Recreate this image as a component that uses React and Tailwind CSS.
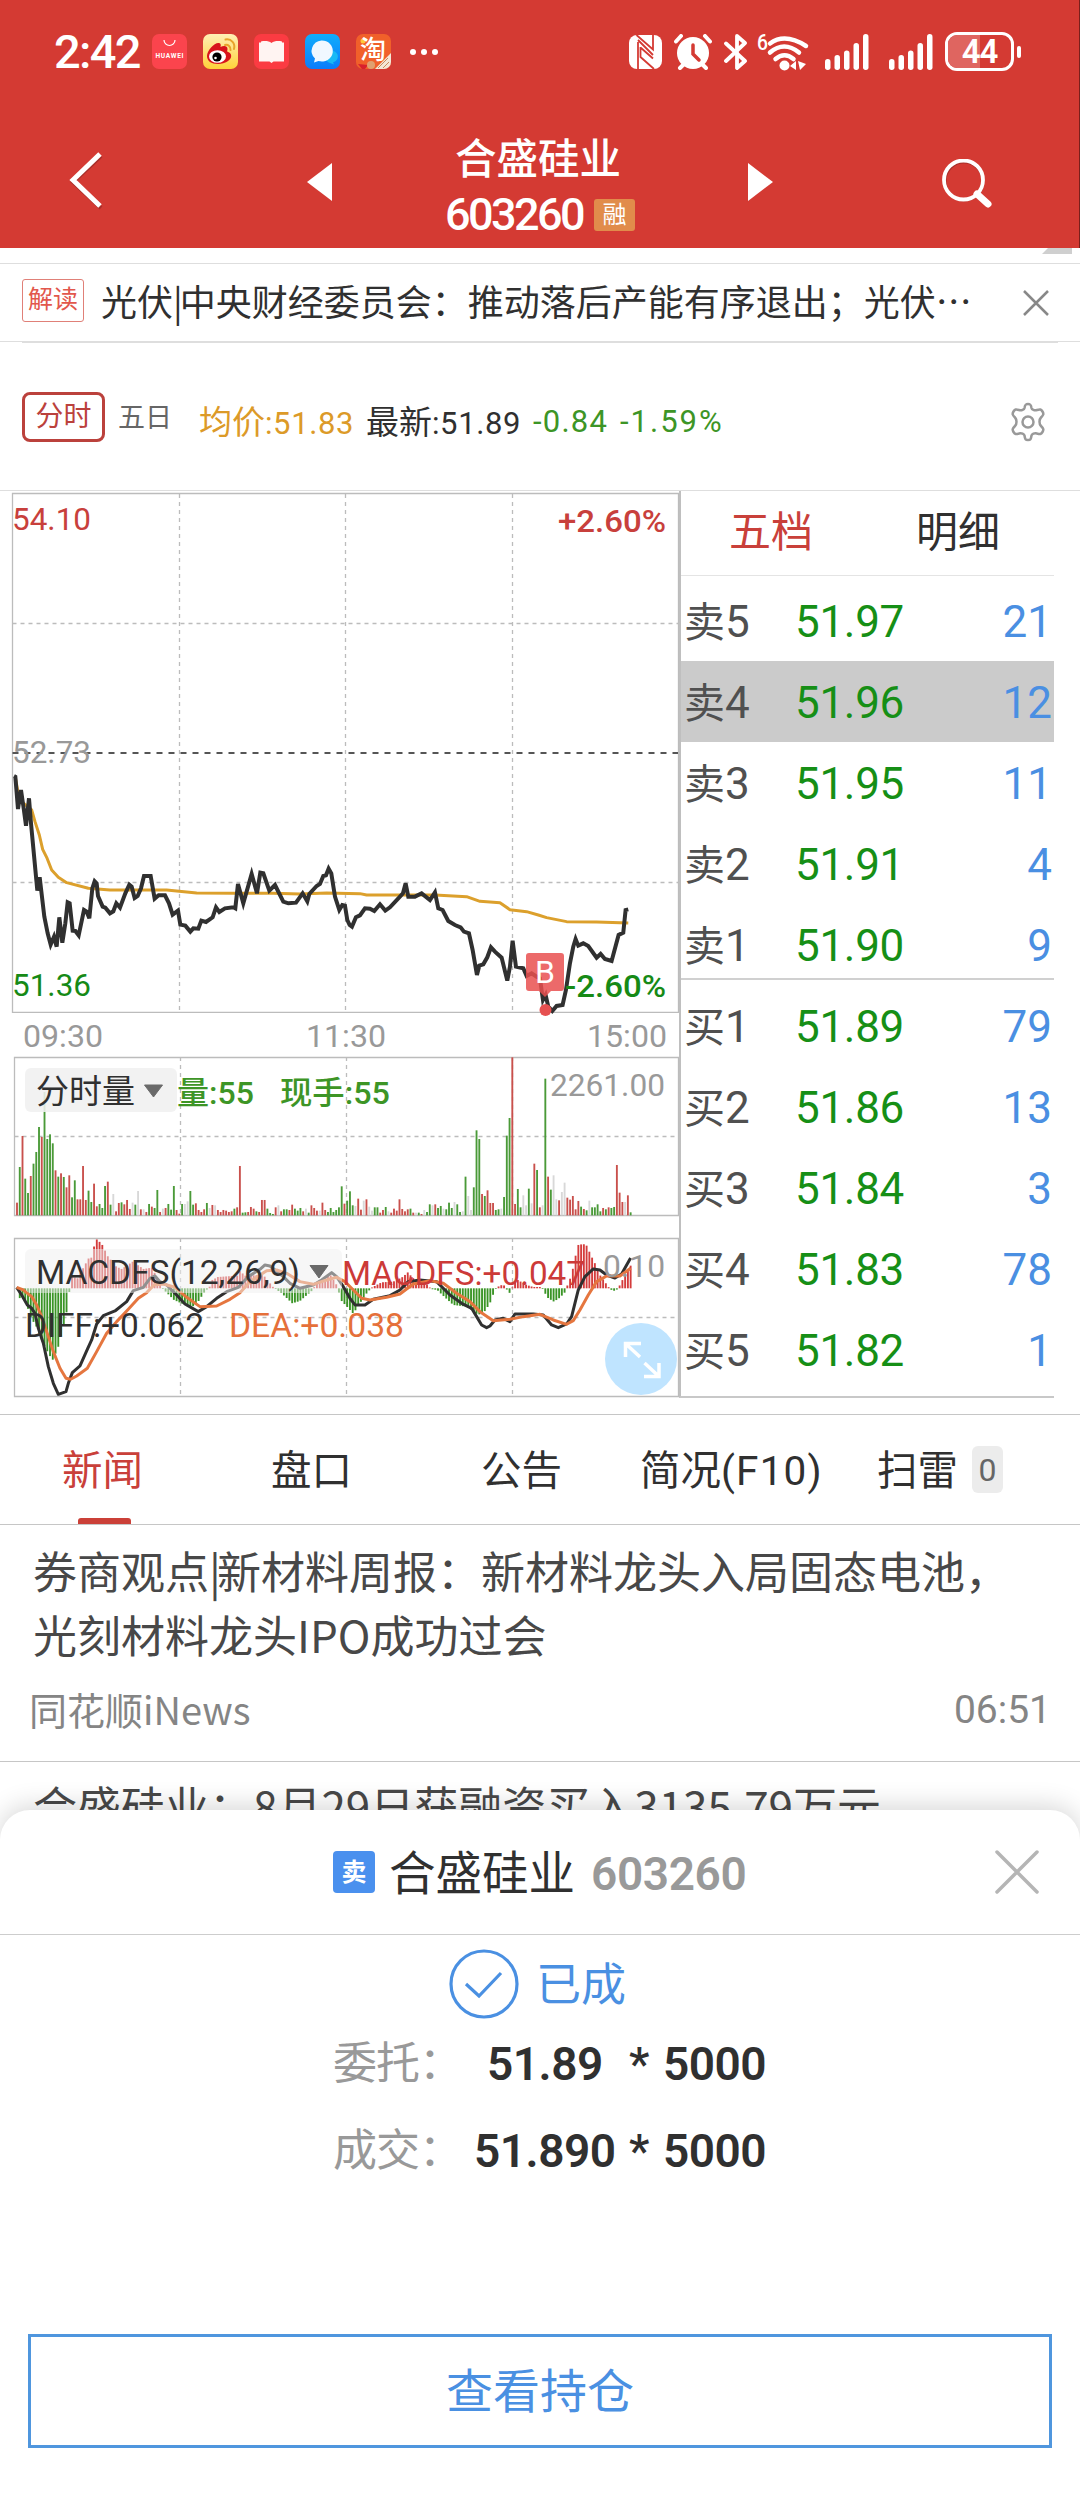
import React from 'react';

const GREEN = '#168a16';
const GREY = '#999999';

const asks = [
  { label: '卖5', price: '51.97', vol: 21 },
  { label: '卖4', price: '51.96', vol: 12, active: true },
  { label: '卖3', price: '51.95', vol: 11 },
  { label: '卖2', price: '51.91', vol: 4 },
  { label: '卖1', price: '51.90', vol: 9 },
];

const bids = [
  { label: '买1', price: '51.89', vol: 79 },
  { label: '买2', price: '51.86', vol: 13 },
  { label: '买3', price: '51.84', vol: 3 },
  { label: '买4', price: '51.83', vol: 78 },
  { label: '买5', price: '51.82', vol: 1 },
];

// Chart series live on a grid of 1/3 px
const priceLine = '42,108 46,110 54,207 63,150 71,205 78,257 87,175 93,250 112,452 119,412 133,530 143,580 152,614 162,590 170,620 178,532 187,608 196,550 203,487 209,490 218,572 226,573 236,586 252,510 260,515 268,535 277,445 284,424 290,430 294,468 308,500 316,503 330,520 340,514 349,490 360,503 376,460 388,434 395,440 404,474 413,468 423,445 432,408 452,408 464,476 476,466 495,466 507,490 518,524 534,512 541,554 556,557 571,575 580,565 595,566 604,542 618,546 638,532 648,502 658,516 675,505 700,502 706,505 714,432 730,490 755,402 771,460 781,398 790,400 808,452 825,435 850,485 865,490 888,488 908,460 922,484 928,462 950,438 960,432 970,408 978,406 986,386 994,400 1005,470 1018,510 1027,495 1035,497 1042,540 1049,555 1056,560 1068,532 1080,526 1095,505 1110,506 1123,513 1140,493 1156,512 1170,502 1200,470 1209,460 1217,430 1225,470 1245,470 1265,460 1290,480 1305,457 1315,505 1328,510 1345,543 1365,555 1382,562 1392,575 1407,580 1418,630 1431,705 1438,677 1450,673 1462,652 1473,622 1485,635 1505,653 1522,722 1530,680 1538,602 1548,680 1570,685 1580,708 1595,700 1610,710 1620,715 1629,780 1637,765 1645,800 1657,813 1670,798 1688,795 1698,750 1710,670 1720,620 1727,597 1735,617 1750,610 1765,618 1790,653 1802,642 1815,657 1835,663 1856,585 1870,578 1877,510 1885,508';

const avgLine = '46,112 58,180 75,193 95,210 105,245 118,285 128,328 140,352 155,390 175,412 200,428 265,445 330,450 500,450 590,459 700,460 820,460 900,462 980,459 1080,461 1100,465 1305,465 1400,470 1440,484 1500,488 1530,509 1580,515 1615,525 1640,533 1700,545 1790,546 1885,549';

// r = up, g = down, w = flat; the number is the bar's height
const volume = 'r38 g145 r238 g110 g67 r118 g155 g190 g265 r235 g370 g229 g243 g216 r135 g116 r126 g115 r84 r120 g54 g105 r48 r48 r148 r46 g74 g40 r95 r27 g34 g22 g88 r101 g32 w64 r12 r37 g39 r33 r46 r19 w38 g32 w73 r18 w18 r10 g34 r26 g22 g76 r10 w20 r22 g34 g17 g88 r16 r5 g34 w34 w42 g73 g32 r36 r16 r10 r18 g37 w22 r31 w30 r16 r10 r16 r14 r10 r12 g20 r24 r148 g8 g9 r10 r25 r20 g12 r10 r46 r46 g20 g7 g4 r24 w30 r12 g18 g18 r16 r32 g20 g14 g22 r12 w20 g8 r30 r22 r14 w14 r38 r16 g10 g22 g10 g16 g24 g87 r35 g44 g72 g30 w28 r50 r17 w44 r48 w26 w14 g24 g24 r8 r16 g25 w12 r8 r20 r14 r48 r19 r12 r18 g20 r8 w8 g8 r4 w16 g10 g33 w30 r33 g22 g28 w20 g18 g38 g22 w40 g33 g10 w12 g116 w58 w16 g84 g255 g229 r64 g58 r75 r37 r37 g16 g18 w20 g55 g239 g292 r474 r34 g79 g24 w60 w30 g80 w36 r155 g136 r24 w30 g410 r116 g77 w120 w48 r45 w70 w98 r53 r47 r58 r18 r43 g26 r19 g15 w44 g24 g24 g33 g12 r22 g18 r24 g22 g25 r151 r68 r40 w40 r60 g9'.split(' ');
const volumeColors = { r: '#c9504c', g: '#4a9a38', w: '#d8d8d8' };

const macdKeys = [
  [51, 0], [60, -32], [68, -25], [76, -38], [93, -88], [109, -115], [134, -175], [151, -205], [159, -215], [175, -175], [192, -110], [200, -70],
  [208, -10], [216, 35], [233, 30], [249, 60], [266, 90], [274, 92], [282, 125], [291, 148], [307, 130], [324, 95], [349, 65], [365, 58], [398, 80],
  [431, 58], [456, 62], [472, 30], [480, 10], [497, -10], [522, -35], [571, -57], [588, -50], [613, -12], [629, 5], [637, 25], [654, 34], [712, 38],
  [720, 52], [735, 38], [790, 40], [820, 3], [845, -15], [877, -45], [900, -38], [935, -8], [950, 15], [990, 42], [1010, 10], [1025, -38], [1060, -76],
  [1080, -45], [1100, -15], [1115, 2], [1145, 18], [1180, 20], [1210, 35], [1223, 48], [1245, 25], [1285, 10], [1292, -2], [1312, -5], [1325, -18],
  [1360, -50], [1400, -55], [1435, -80], [1455, -68], [1470, -45], [1482, -12], [1490, 3], [1510, 12], [1520, -3], [1530, -15], [1540, 10], [1548, 28],
  [1580, 10], [1600, 4], [1625, 4], [1632, -10], [1645, -30], [1662, -40], [1680, -28], [1695, -12], [1702, 8], [1715, 40], [1725, 90], [1735, 130],
  [1750, 133], [1760, 128], [1775, 95], [1790, 65], [1800, 40], [1820, 12], [1830, -2], [1840, -8], [1850, -5], [1860, 10], [1875, 40], [1892, 68],
];

const diffLine = '50,712 65,735 82,765 95,775 105,790 115,835 130,880 145,950 160,1000 175,1033 198,1025 205,1000 217,968 240,948 262,898 275,870 290,822 310,797 345,783 380,755 400,722 430,712 450,685 465,678 480,695 500,705 530,735 555,762 595,785 620,770 650,745 680,725 715,712 745,680 780,658 795,645 810,648 825,660 850,680 870,700 900,715 940,705 965,690 995,668 1010,680 1030,710 1050,745 1065,765 1095,765 1120,748 1170,737 1200,720 1225,695 1260,690 1310,695 1350,735 1385,760 1415,775 1430,800 1445,825 1460,833 1470,828 1485,810 1510,805 1530,815 1545,792 1600,792 1630,795 1655,825 1675,833 1700,822 1715,800 1735,720 1755,680 1780,657 1800,660 1820,675 1845,684 1865,672 1892,624';
const deaLine = '50,712 70,720 95,740 110,765 125,800 140,845 160,905 180,955 198,985 212,988 230,978 262,955 290,905 320,850 350,815 385,778 415,745 440,728 462,705 490,702 525,712 560,742 600,770 650,768 690,748 720,728 750,695 800,662 830,660 860,670 900,695 940,703 980,690 1010,682 1035,695 1060,720 1085,745 1110,750 1160,742 1200,732 1240,702 1290,692 1330,700 1370,730 1410,755 1440,785 1480,812 1530,808 1570,800 1620,793 1660,810 1700,823 1720,812 1740,780 1765,735 1790,695 1820,678 1860,678 1892,655';

const barX = (i) => 51 + i * 8.256;

function macdAt(x) {
  const k = macdKeys.findIndex(([kx]) => kx >= x);
  if (k === -1) return macdKeys[macdKeys.length - 1][1];
  if (k === 0) return macdKeys[0][1];
  const [x0, y0] = macdKeys[k - 1];
  const [x1, y1] = macdKeys[k];
  return y0 + ((y1 - y0) * (x - x0)) / (x1 - x0);
}

function Label({ x, y, w, size = 32, fill, weight = 400, children }) {
  return (
    <text x={x} y={y} textLength={w} lengthAdjust="spacingAndGlyphs" fontSize={size} fontWeight={weight} fill={fill}>
      {children}
    </text>
  );
}

function Signal() {
  return (
    <svg width="44" height="36" viewBox="0 0 44 36" fill="#fff">
      <rect x="0" y="25" width="5.5" height="11" rx="2.7" />
      <rect x="9.5" y="21" width="5.5" height="15" rx="2.7" />
      <rect x="19" y="16.5" width="5.5" height="19.5" rx="2.7" />
      <rect x="28.5" y="9" width="5.5" height="27" rx="2.7" />
      <rect x="38" y="0" width="5.5" height="36" rx="2.7" />
    </svg>
  );
}

function StatusBar() {
  return (
    <div className="flex h-[103px] items-center pl-[54px]">
      <span className="w-[98px] text-[47px] leading-none font-medium tracking-[-1.7px] text-white">2:42</span>
      <div className="flex gap-4">
        <svg width="35" height="35" viewBox="0 0 35 35">
          <rect width="35" height="35" rx="7" fill="#fb444d" />
          <path d="M12 6a5.500 5.500 0 0 0 11 0" fill="none" stroke="#fff" strokeWidth="1.2" />
          <text x="3.5" y="23.5" fontSize="6.6" fontWeight="700" fill="#fff" textLength="28">HUAWEI</text>
        </svg>
        <svg width="35" height="35" viewBox="0 0 35 35">
          <defs>
            <linearGradient id="weibo" x2="0" y2="1">
              <stop offset="0" stopColor="#ffefb5" />
              <stop offset="1" stopColor="#ffd23a" />
            </linearGradient>
          </defs>
          <rect width="35" height="35" rx="7" fill="url(#weibo)" />
          <path d="M4 22c0-6 8-14 12-13 2 .5 2 2 1.500 4 3-1.500 7-1.500 7 2 0 1-.5 2-.3 2.500 2 .7 4 2 4 4.500 0 4-6 8-13 8S4 27 4 22z" fill="#d8141c" />
          <ellipse cx="14.5" cy="22.5" rx="8.5" ry="6.3" fill="#fff" />
          <circle cx="14" cy="23" r="4.6" fill="#000" />
          <circle cx="12.5" cy="24" r="1.3" fill="#fff" />
          <path d="M22 11c3-.7 6 1.500 5.500 5M22.500 5.500c6-1 10 4 8.500 9.500" fill="none" stroke="#e8a32c" strokeWidth="2" strokeLinecap="round" />
        </svg>
        <svg width="35" height="35" viewBox="0 0 35 35">
          <rect width="35" height="35" rx="7" fill="#fb3b42" />
          <path d="M5 8.500h2V7.500c4-1 8-.5 10.500 1.500C20 7 24 6.500 28 7.500v1h2V27.500H19.500l-2 1.500-2-1.500H5z" fill="#fff4f2" />
        </svg>
        <svg width="35" height="35" viewBox="0 0 35 35">
          <defs>
            <linearGradient id="msg" x2="0" y2="1">
              <stop offset="0" stopColor="#10adfb" />
              <stop offset="1" stopColor="#0a7cfb" />
            </linearGradient>
          </defs>
          <rect width="35" height="35" rx="7" fill="url(#msg)" />
          <path d="M23 18a6 6 0 1 1 5 10.500l1 2-4-1.500a6 6 0 0 1-4-6z" fill="#19b9f5" />
          <path d="M16.500 6.500a11 10.500 0 1 1-3 20.500l-4.500 1.500 1-4A11 10.500 0 0 1 16.500 6.500z" fill="#f0f8ff" />
        </svg>
        <svg width="35" height="35" viewBox="0 0 35 35">
          <rect width="35" height="35" rx="7" fill="#f1602a" />
          <circle cx="7" cy="7" r="2.5" fill="#ffc93c" />
          <path d="M19 35 35 19v9a7 7 0 0 1-7 7z" fill="#f4e6d6" />
          <path d="M2 30l10 1-3 4H6z" fill="#d8202c" />
          <circle cx="15" cy="31" r="4" fill="#e0a070" />
          <path d="m22 34 10-10M27 34l6-6" stroke="#c98a5c" strokeWidth="1" />
          <text x="4" y="25" fontSize="26" fontWeight="500" fill="#fff">淘</text>
        </svg>
      </div>
      <svg className="ml-[19px]" width="28" height="6" viewBox="0 0 28 6" fill="#fff">
        <circle cx="3" cy="3" r="3" />
        <circle cx="14" cy="3" r="3" />
        <circle cx="25" cy="3" r="3" />
      </svg>

      <svg className="ml-[191px]" width="33" height="34" viewBox="0 0 33 34">
        <rect width="33" height="34" rx="8" fill="#fff" />
        <path d="M7.500 0 24 14.500V0" fill="none" stroke="#d43a33" strokeWidth="1.8" />
        <path d="M9 34V7" fill="none" stroke="#d43a33" strokeWidth="1.800" />
        <path d="M9 5 24 20M11.500 12.500 24 23.500M11.500 12v10L25 34" fill="none" stroke="#d43a33" strokeWidth="1.800" />
      </svg>
      <svg className="ml-3" width="38" height="36" viewBox="0 0 38 36" fill="none" stroke="#fff" strokeLinecap="round">
        <circle cx="19" cy="19" r="16" fill="#fff" stroke="none" />
        <path d="M2 7.500 7 2M36 7.500 31 2M6 34l4-4M32 34l-4-4" strokeWidth="4" />
        <path d="M19 11v9l6 6" stroke="#d43a33" strokeWidth="3.5" />
      </svg>
      <svg className="ml-3" width="24" height="36" viewBox="0 0 24 36" fill="none" stroke="#fff" strokeWidth="3.8" strokeLinecap="round" strokeLinejoin="round">
        <path d="M2 9.500 21 27l-8 7V2l8 7L2 27" />
      </svg>
      <svg className="ml-[9px] overflow-visible" width="52" height="38" viewBox="0 0 52 38" fill="none" stroke="#fff">
        <text x="0" y="17" fontSize="22" fontWeight="500" fill="#fff" stroke="none" textLength="11" lengthAdjust="spacingAndGlyphs">6</text>
        <path d="M13 10.500q15-11 36 2.500" strokeWidth="4.5" strokeLinecap="round" />
        <path d="M13 19.500q14-12 29 0" strokeWidth="4.5" strokeLinecap="round" />
        <path d="M18.500 26q9-7.500 18 0" strokeWidth="4.5" strokeLinecap="round" />
        <circle cx="27.5" cy="32.5" r="5" fill="#fff" stroke="none" />
        <path d="m33 33 6-5v9zM41 28l8 3-6 6z" fill="#fff" stroke="none" />
      </svg>
      <span className="ml-[16px]"><Signal /></span>
      <span className="ml-[20px]"><Signal /></span>
      <div className="relative ml-[12px] flex h-[39px] w-[69px] items-center justify-center rounded-[12px] border-[3px] border-white">
        <div className="absolute inset-y-0 left-0 w-[32px] rounded-l-[9px] bg-[#df6560]" />
        <span className="relative text-[33px] leading-[33px] font-semibold tracking-[-1px] text-white">44</span>
      </div>
      <div className="ml-[3px] h-[12px] w-[4px] rounded-full bg-white" />
    </div>
  );
}

function Header() {
  return (
    <header className="h-[248px] w-full border-r border-[#7a1f1b] bg-[#d43a33]">
      <StatusBar />
      <div className="flex h-[145px] items-start">
        <svg className="mt-[47px] ml-[68px]" width="36" height="60" viewBox="0 0 36 60" fill="none">
          <path d="M33 6 5 32l28 26" stroke="#a82f2a" strokeWidth="4" />
          <path d="M32 4 5 30l27 26" stroke="#fff" strokeWidth="5" />
        </svg>
        <svg className="mt-[60px] ml-[203px]" width="25" height="38" viewBox="0 0 25 38">
          <path d="M25 0v38L0 19z" fill="#fff" />
        </svg>
        <div className="mt-[33px] ml-[113px] w-[191px]">
          <div className="pl-[10px] text-[41.5px] leading-[48px] font-medium text-white">合盛硅业</div>
          <div className="mt-[9px] flex items-center">
            <span className="w-[149px] text-[45px] leading-[44px] font-medium tracking-[-2.6px] text-white">603260</span>
            <span className="flex h-[32px] w-[41px] items-center justify-center rounded-[3px] bg-[#e18c4b] text-[24px] leading-none text-white">融</span>
          </div>
        </div>
        <svg className="mt-[60px] ml-[112px]" width="25" height="38" viewBox="0 0 25 38">
          <path d="M0 0v38l25-19z" fill="#fff" />
        </svg>
        <svg className="mt-[56px] ml-[168px]" width="52" height="54" viewBox="0 0 52 54" fill="none">
          <circle cx="23" cy="22" r="19" stroke="#a82f2a" strokeWidth="3" />
          <circle cx="22.5" cy="21" r="19.5" stroke="#fff" strokeWidth="3.8" />
          <path d="m36 35 11 10" stroke="#fff" strokeWidth="7" strokeLinecap="round" />
        </svg>
      </div>
    </header>
  );
}

function NewsTicker() {
  return (
    <>
      <div className="flex h-[15px] justify-end pr-[8px]">
        <svg width="30" height="6" viewBox="0 0 30 6"><path d="M6 0h24v6H0z" fill="#cfcfcf" /></svg>
      </div>
      <div className="flex h-[79px] items-center border-y border-[#dedede] pl-[22px]">
        <span className="mb-[4px] flex h-[43px] w-[62px] items-center justify-center rounded-[3px] border border-[#e08078] pb-[3px] text-[25px] leading-none text-[#e2574c]">解读</span>
        <span className="mb-[5px] ml-[17px] w-[900px] font-['Noto_Sans_CJK_SC'] text-[36px] leading-[50px] whitespace-nowrap text-[#303030]">
          光伏<span className="tracking-[-3px]">|</span>中央财经委员会：推动落后产能有序退出；光伏⋯
        </span>
        <svg className="ml-[22px]" width="26" height="26" viewBox="0 0 26 26" stroke="#888" strokeWidth="2.5">
          <path d="M1 1l24 24M25 1 1 25" />
        </svg>
      </div>
      <div className="mx-[22px] h-px bg-[#dedede]" />
    </>
  );
}

function PeriodBar() {
  return (
    <div className="flex h-[148px] items-center border-b border-[#dedede] pl-[22px] text-[31px]">
      <span className="flex h-[50px] w-[83px] items-center justify-center rounded-[8px] border-[3px] border-[#bb413c] text-[28px] leading-none text-[#bb413c]">分时</span>
      <span className="ml-[13px] mt-[4px] w-[81px] text-[27px] text-[#666]">五日</span>
      <span className="mt-[12px] w-[167px] tracking-[0.6px] whitespace-nowrap text-[#dc9a28]"><span className="text-[33px] tracking-normal">均价</span>:51.83</span>
      <span className="mt-[12px] w-[167px] tracking-[0.6px] whitespace-nowrap text-[#303030]"><span className="text-[33px] tracking-normal">最新</span>:51.89</span>
      <span className="mt-[12px] w-[87px] tracking-[1.2px] text-[#3d9526]">-0.84</span>
      <span className="mt-[12px] w-[388px] tracking-[2px] text-[#3d9526]">-1.59%</span>
      <svg className="mt-[10px]" width="40" height="40" viewBox="0 0 40 40" fill="none" stroke="#999" strokeWidth="2.5" strokeLinejoin="round">
        <path d="M20 2c2.500 0 3 .8 3.500 4 .3 1.500 3 3 5.500 2 3-1 4-1 5.500 1.500s1 3.500-1.500 6c-2 2-2 6.500 0 8.500 2.500 2.500 3 3.500 1.500 6s-2.500 2.500-5.500 1.500c-2.500-1-5.200.5-5.500 2-.5 3.700-1 4.500-3.500 4.500s-3-.8-3.500-4.500c-.3-1.500-3-3-5.500-2-3 1-4 1-5.500-1.500s-1-3.500 1.500-6c2-2 2-6.500 0-8.500-2.500-2.500-3-3.500-1.500-6S8 7 11 8c2.500 1 5.200-.5 5.500-2 .5-3.200 1-4 3.500-4z" />
        <circle cx="20" cy="20" r="5.5" />
      </svg>
    </div>
  );
}

function Charts() {
  return (
    <svg className="block shrink-0 font-['Roboto','Noto_Sans_CJK_SC',sans-serif]" width="679" height="908" viewBox="0 491 679 908" fill="none">
      {/* Grid */}
      <g stroke="#bcbcbc" strokeWidth="1.3">
        <path d="M12.500 493.500H678.500V1012.300H12.500z" />
        <path d="M14.500 1057.500H678.500V1215.500H14.500z" />
        <path d="M14.500 1238.500H678.500V1396.500H14.500z" />
        <g strokeDasharray="4 4">
          <path d="M12.500 623.500H678M12.500 882.500H678M14.500 1136.500H678M14.500 1317.500H678" />
          <path d="M179.500 494V1012M345.500 494V1012M512.500 494V1012" />
          <path d="M180.500 1057V1215M346.500 1057V1215M512.500 1057V1215M180.500 1238V1396M346.500 1238V1396M512.500 1238V1396" />
        </g>
      </g>
      <path d="M12.500 753H678" stroke="#555" strokeWidth="1.8" strokeDasharray="6 6" />

      {/* Price */}
      <Label x="12" y="530" w="79" fill="#c8403c">54.10</Label>
      <Label x="12" y="763" w="79" fill={GREY}>52.73</Label>
      <g transform="translate(0 740) scale(.3333)">
        <polyline points={avgLine} stroke="#dca02c" strokeWidth="9" strokeLinejoin="round" />
        <polyline points={priceLine} stroke="#303030" strokeWidth="12" strokeLinejoin="miter" />
      </g>
      <path d="M529 953H561q3 0 3 3V988q0 3-3 3H551L545 997 539 991H529q-3 0-3-3V956q0-3 3-3z" fill="#e95050" fillOpacity=".85" />
      <circle cx="545.5" cy="1010" r="6" fill="#e65050" />
      <text x="535" y="983" fontSize="32" fill="#fff">B</text>
      <Label x="558" y="532" w="108" weight="500" fill="#c8403c">+2.60%</Label>
      <Label x="12" y="996" w="79" fill={GREEN}>51.36</Label>
      <Label x="565" y="996.5" w="101" weight="500" fill={GREEN}>-2.60%</Label>
      <Label x="23" y="1047" w="80" fill={GREY}>09:30</Label>
      <Label x="306" y="1047" w="80" fill={GREY}>11:30</Label>
      <Label x="587" y="1047" w="80" fill={GREY}>15:00</Label>

      {/* Volume */}
      <g transform="translate(0 1050) scale(.3333)">
        {volume.map((v, i) => {
          const h = Number(v.slice(1));
          return <rect key={i} x={barX(i) - 2.8} y={496 - h} width="5.6" height={h} fill={volumeColors[v[0]]} />;
        })}
      </g>
      <rect x="25" y="1068" width="152" height="44" rx="6" fill="#f0f0f0" fillOpacity=".88" />
      <Label x="36" y="1103" w="99" size="33" fill="#303030">分时量</Label>
      <path d="M144.500 1085H162.500L153.500 1097z" fill="#6a6a6a" stroke="#6a6a6a" strokeLinejoin="round" />
      <Label x="177" y="1104" w="77" size="32" weight="500" fill="#3d9526">量:55</Label>
      <Label x="280" y="1104" w="110" size="32" weight="500" fill="#3d9526">现手:55</Label>
      <Label x="550" y="1096" w="115" fill={GREY}>2261.00</Label>

      {/* MACD */}
      <g transform="translate(0 1050) scale(.3333)">
        {volume.map((_, i) => {
          const h = macdAt(barX(i));
          return <rect key={i} x={barX(i) - 2.8} y={h > 0 ? 715 - h : 715} width="5.6" height={Math.max(Math.abs(h), 2)} fill={h > 0 ? '#d43c3c' : '#3a9426'} />;
        })}
        <polyline points={diffLine} stroke="#303030" strokeWidth="9" strokeLinejoin="round" />
        <polyline points={deaLine} stroke="#e5763f" strokeWidth="9" strokeLinejoin="round" />
      </g>
      <rect x="25" y="1249" width="317" height="44" rx="6" fill="#efefef" fillOpacity=".5" />
      <Label x="36" y="1284" w="264" size="33" fill="#303030">MACDFS(12,26,9)</Label>
      <path d="M310 1265.500H328L319 1278z" fill="#6a6a6a" stroke="#6a6a6a" strokeLinejoin="round" />
      <Label x="342" y="1285" w="243" size="33" weight="400" fill="#cc3a38">MACDFS:+0.047</Label>
      <Label x="603" y="1277" w="62" fill={GREY}>0.10</Label>
      <Label x="25" y="1337" w="179" size="33" fill="#303030">DIFF:+0.062</Label>
      <Label x="229" y="1337" w="175" size="33" fill="#e5703a">DEA:+0.038</Label>

      <circle cx="641" cy="1359" r="36" fill="#bfe4ff" />
      <path d="M625.500 1357V1343.500H641M626 1344l14 13M659 1363V1376.500H644M658.500 1376l-14-13" stroke="#fff" strokeWidth="3.5" />
    </svg>
  );
}

function BookRow({ label, price, vol, active }) {
  return (
    <div className={`flex h-[81px] items-center pt-[2px] pr-[2px] pl-[3px] text-[44px] leading-none ${active ? 'bg-[#cbcbcb]' : ''}`}>
      <span className="w-[111px] text-[#505050]"><span className="text-[41px]">{label[0]}</span>{label[1]}</span>
      <span className="tracking-[-0.3px] text-[#168f16]">{price}</span>
      <span className="ml-auto text-[#4a8fe2]">{vol}</span>
    </div>
  );
}

function OrderBook() {
  return (
    <div className="h-[907px] w-[375px] border-b-2 border-l-2 border-b-[#c8c8c8] border-l-[#bfbfbf]">
      <div className="flex h-[85px] items-center border-b border-[#e4e4e4] pl-[48px] text-[42px] leading-none">
        <span className="w-[187px] text-[#c9403a]">五档</span>
        <span className="text-[#303030]">明细</span>
      </div>
      <div className="h-[404px] border-b-2 border-[#d0d0d0] pt-[4px]">
        {asks.map((r) => <BookRow key={r.label} {...r} />)}
      </div>
      <div className="pt-[5px]">
        {bids.map((r) => <BookRow key={r.label} {...r} />)}
      </div>
    </div>
  );
}

function InfoTabs() {
  return (
    <nav className="mt-[15px] flex h-[111px] items-center border-y border-[#c6c6c6] text-[40.5px] leading-none text-[#303030]">
      <div className="relative flex h-full w-[209px] items-center pt-[3px] pl-[62px] text-[#c9403a]">
        新闻
        <span className="absolute bottom-0 left-[78px] h-[6px] w-[53px] rounded-t-[3px] bg-[#cb4038]" />
      </div>
      <span className="ml-[62px] w-[210px] pt-[3px]">盘口</span>
      <span className="w-[159px] pt-[3px]">公告</span>
      <span className="w-[237px] pt-[3px]">简况<span className="tracking-[1.2px]">(F10)</span></span>
      <span className="w-[95px] pt-[3px]">扫雷</span>
      <span className="flex h-[47px] w-[31px] items-center justify-center rounded-[6px] bg-[#ececec] text-[32px] text-[#666]">0</span>
    </nav>
  );
}

function NewsList() {
  return (
    <section className="font-['Noto_Sans_CJK_SC'] text-[#484848]">
      <article className="h-[237px] border-b border-[#c6c6c6] pt-[13px]">
        <h3 className="pl-[33px] text-[44px] leading-[64px] font-normal">
          券商观点<span className="tracking-[-4px]">|</span>新材料周报：新材料龙头入局固态电池，
          <br />
          光刻材料龙头IPO成功过会
        </h3>
        <div className="mt-[16px] flex items-center justify-between pr-[29px] pl-[29px] text-[38px] leading-[50px] text-[#858585]">
          <span>同花顺iNews</span>
          <span className="pt-[3px] font-['Roboto'] text-[39px]">06:51</span>
        </div>
      </article>
      <h3 className="pt-[11px] pl-[33px] text-[44px] leading-[64px] font-normal whitespace-nowrap">合盛硅业：8月29日获融资买入3135.79万元</h3>
    </section>
  );
}

function TradeSheet() {
  return (
    <div className="absolute inset-x-0 bottom-0 h-[694px] rounded-t-[30px] bg-white shadow-[0_-4px_26px_rgba(0,0,0,0.16)]">
      <div className="flex h-[125px] items-center border-b border-[#cdcdcd] pl-[333px]">
        <span className="flex h-[42px] w-[42px] items-center justify-center rounded-[4px] bg-[#4a90ee] text-[25px] leading-none font-bold text-white">卖</span>
        <span className="ml-[14px] w-[202px] pt-[4px] text-[46.5px] leading-none text-[#303030]">合盛硅业</span>
        <span className="w-[404px] pt-[4px] text-[46px] leading-none font-semibold tracking-[-0.4px] text-[#999]">603260</span>
        <svg width="44" height="44" viewBox="0 0 44 44" stroke="#b5b5b5" strokeWidth="3.5" strokeLinecap="round">
          <path d="M2 2l40 40M42 2 2 42" />
        </svg>
      </div>
      <div className="flex h-[97px] items-center pl-[449px] text-[#4a90e2]">
        <svg width="70" height="70" viewBox="0 0 70 70" fill="none" stroke="#4a90e2" strokeWidth="3.2">
          <circle cx="35" cy="35" r="33" />
          <path d="m17 35 13 12 22-23" />
        </svg>
        <span className="ml-[17px] pt-[3px] text-[45px] leading-none">已成</span>
      </div>
      <div className="flex h-[64px] items-center pl-[333px] text-[46px] leading-none font-semibold tracking-[-0.5px] text-[#303030]">
        <span className="w-[154px] text-[44px] font-normal tracking-[-1px] text-[#999]">委托：</span>
        <span className="w-[142px]">51.89</span>
        <span className="w-[34px] font-medium">*</span>
        <span>5000</span>
      </div>
      <div className="mt-[23px] flex h-[64px] items-center pl-[333px] text-[46px] leading-none font-semibold tracking-[-0.5px] text-[#303030]">
        <span className="w-[141px] text-[44px] font-normal tracking-[-1px] text-[#999]">成交：</span>
        <span className="w-[155px]">51.890</span>
        <span className="w-[34px] font-medium">*</span>
        <span>5000</span>
      </div>
      <button className="mt-[151px] ml-[28px] flex h-[114px] w-[1024px] items-center justify-center border-[3px] border-[#4f96de] text-[47px] leading-none text-[#4a90e2]">
        查看持仓
      </button>
    </div>
  );
}

export default function App() {
  return (
    <div className="relative h-[2504px] w-[1080px] overflow-hidden bg-white font-['Roboto','Noto_Sans_CJK_SC',sans-serif]">
      <Header />
      <NewsTicker />
      <PeriodBar />
      <div className="flex h-[908px]">
        <Charts />
        <OrderBook />
      </div>
      <InfoTabs />
      <NewsList />
      <TradeSheet />
    </div>
  );
}
